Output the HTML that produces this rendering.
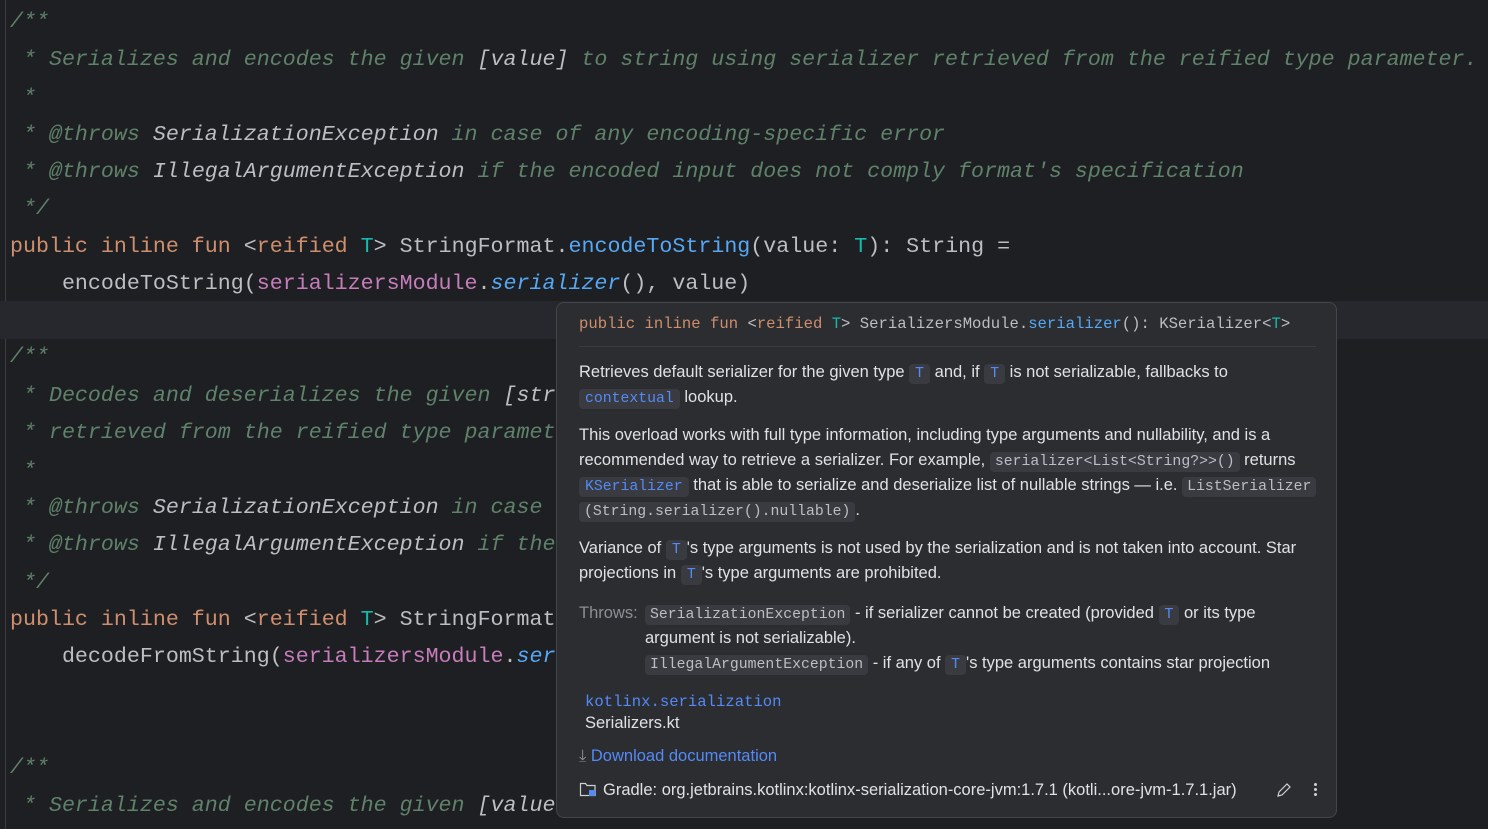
<!DOCTYPE html>
<html><head><meta charset="utf-8"><style>
*{margin:0;padding:0;box-sizing:border-box}
body{width:1488px;height:829px;background:#1e1f22;overflow:hidden;position:relative;font-family:"Liberation Mono",monospace}
.gut{position:absolute;left:5px;top:0;width:1px;height:829px;background:#393b40}
.cur{position:absolute;left:0;top:301px;width:1488px;height:38px;background:#26282e}
.l{position:absolute;left:10px;white-space:pre;font-size:21.65px;line-height:37px;color:#bcbec4}
.c{color:#5f826b;font-style:italic}
.ct{color:#bcbec4;font-style:italic}
.k{color:#cf8e6d}.t{color:#16baac}.f{color:#56a8f5}.p{color:#c77dbb}.fi{color:#56a8f5;font-style:italic}
.pop{position:absolute;left:556px;top:302px;width:781px;height:516px;background:#2b2d30;border:1px solid #43454a;border-radius:8px;font-family:"Liberation Sans",sans-serif;color:#dfe1e5;font-size:16.5px}
.r{position:absolute;left:22px;white-space:nowrap;line-height:25px}
.m{font-family:"Liberation Mono",monospace}
.ch{font-family:"Liberation Mono",monospace;font-size:14.8px;background:#393b40;border-radius:4px;padding:2px 5px;color:#bcbec4}
.cb{font-family:"Liberation Mono",monospace;font-size:14.8px;background:#393b40;border-radius:4px;padding:2px 6px;color:#548af7}
</style></head><body>
<div class="gut"></div>
<div class="cur"></div>
<div class="l c" style="top:3px">/**</div>
<div class="l c" style="top:41px"> * Serializes and encodes the given <span class="ct">[value]</span> to string using serializer retrieved from the reified type parameter.</div>
<div class="l c" style="top:79px"> *</div>
<div class="l c" style="top:116px"> * @throws <span class="ct">SerializationException</span> in case of any encoding-specific error</div>
<div class="l c" style="top:153px"> * @throws <span class="ct">IllegalArgumentException</span> if the encoded input does not comply format's specification</div>
<div class="l c" style="top:190px"> */</div>
<div class="l" style="top:228px"><span class="k">public inline fun </span>&lt;<span class="k">reified </span><span class="t">T</span>&gt; StringFormat.<span class="f">encodeToString</span>(value: <span class="t">T</span>): String =</div>
<div class="l" style="top:265px">    encodeToString(<span class="p">serializersModule</span>.<span class="fi">serializer</span>(), value)</div>
<div class="l c" style="top:338px">/**</div>
<div class="l c" style="top:377px"> * Decodes and deserializes the given <span class="ct">[str</span></div>
<div class="l c" style="top:414px"> * retrieved from the reified type paramet</div>
<div class="l c" style="top:452px"> *</div>
<div class="l c" style="top:489px"> * @throws <span class="ct">SerializationException</span> in case</div>
<div class="l c" style="top:526px"> * @throws <span class="ct">IllegalArgumentException</span> if the</div>
<div class="l c" style="top:564px"> */</div>
<div class="l" style="top:601px"><span class="k">public inline fun </span>&lt;<span class="k">reified </span><span class="t">T</span>&gt; StringFormat</div>
<div class="l" style="top:638px">    decodeFromString(<span class="p">serializersModule</span>.<span class="fi">ser</span></div>
<div class="l c" style="top:749px">/**</div>
<div class="l c" style="top:787px"> * Serializes and encodes the given <span class="ct">[value</span></div>

<div class="pop">
<div class="r m" style="top:9px;font-size:15.6px;color:#bcbec4"><span class="k">public inline fun </span>&lt;<span class="k">reified </span><span class="t">T</span>&gt; SerializersModule.<span class="f">serializer</span>(): KSerializer&lt;<span class="t">T</span>&gt;</div>
<div style="position:absolute;left:22px;top:43px;width:737px;height:1px;background:#393b40"></div>
<div class="r" style="top:57px">Retrieves default serializer for the given type <span class="cb">T</span> and, if <span class="cb">T</span> is not serializable, fallbacks to</div>
<div class="r" style="top:82px"><span class="cb">contextual</span> lookup.</div>
<div class="r" style="top:120px">This overload works with full type information, including type arguments and nullability, and is a</div>
<div class="r" style="top:145px">recommended way to retrieve a serializer. For example, <span class="ch">serializer&lt;List&lt;String?&gt;&gt;()</span> returns</div>
<div class="r" style="top:170px"><span class="cb">KSerializer</span> that is able to serialize and deserialize list of nullable strings — i.e. <span class="ch">ListSerializer</span></div>
<div class="r" style="top:195px"><span class="ch">(String.serializer().nullable)</span>.</div>
<div class="r" style="top:233px">Variance of <span class="cb">T</span>'s type arguments is not used by the serialization and is not taken into account. Star</div>
<div class="r" style="top:258px">projections in <span class="cb">T</span>'s type arguments are prohibited.</div>
<div class="r" style="top:298px;color:#8c8f94">Throws:</div>
<div class="r" style="left:88px;top:298px"><span class="ch">SerializationException</span> - if serializer cannot be created (provided <span class="cb">T</span> or its type</div>
<div class="r" style="left:88px;top:323px">argument is not serializable).</div>
<div class="r" style="left:88px;top:348px"><span class="ch">IllegalArgumentException</span> - if any of <span class="cb">T</span>'s type arguments contains star projection</div>
<div class="r m" style="left:28px;top:387px;font-size:15.6px;color:#548af7">kotlinx.serialization</div>
<div class="r" style="left:28px;top:408px">Serializers.kt</div>
<div class="r" style="top:441px;color:#548af7"><span style="color:#8c8f94">⤓</span> Download documentation</div>
<div class="r" style="top:475px"><svg width="18" height="18" viewBox="0 0 18 18" style="vertical-align:-3px;margin-right:6px"><path d="M1.5 3.5h5l1.5 2h8v10h-14.5z" fill="none" stroke="#ced0d6" stroke-width="1.2"/><rect x="10" y="10" width="6" height="6" fill="#548af7"/></svg>Gradle: org.jetbrains.kotlinx:kotlinx-serialization-core-jvm:1.7.1 (kotli...ore-jvm-1.7.1.jar)</div>
<svg style="position:absolute;left:718px;top:478px" width="18" height="18" viewBox="0 0 18 18"><path d="M3 15l1-4 8-8 3 3-8 8z" fill="none" stroke="#ced0d6" stroke-width="1.2"/></svg>
<div style="position:absolute;left:757px;top:480px;width:3px;height:3px;border-radius:2px;background:#ced0d6;box-shadow:0 5px 0 #ced0d6,0 10px 0 #ced0d6"></div>
</div>
</body></html>
